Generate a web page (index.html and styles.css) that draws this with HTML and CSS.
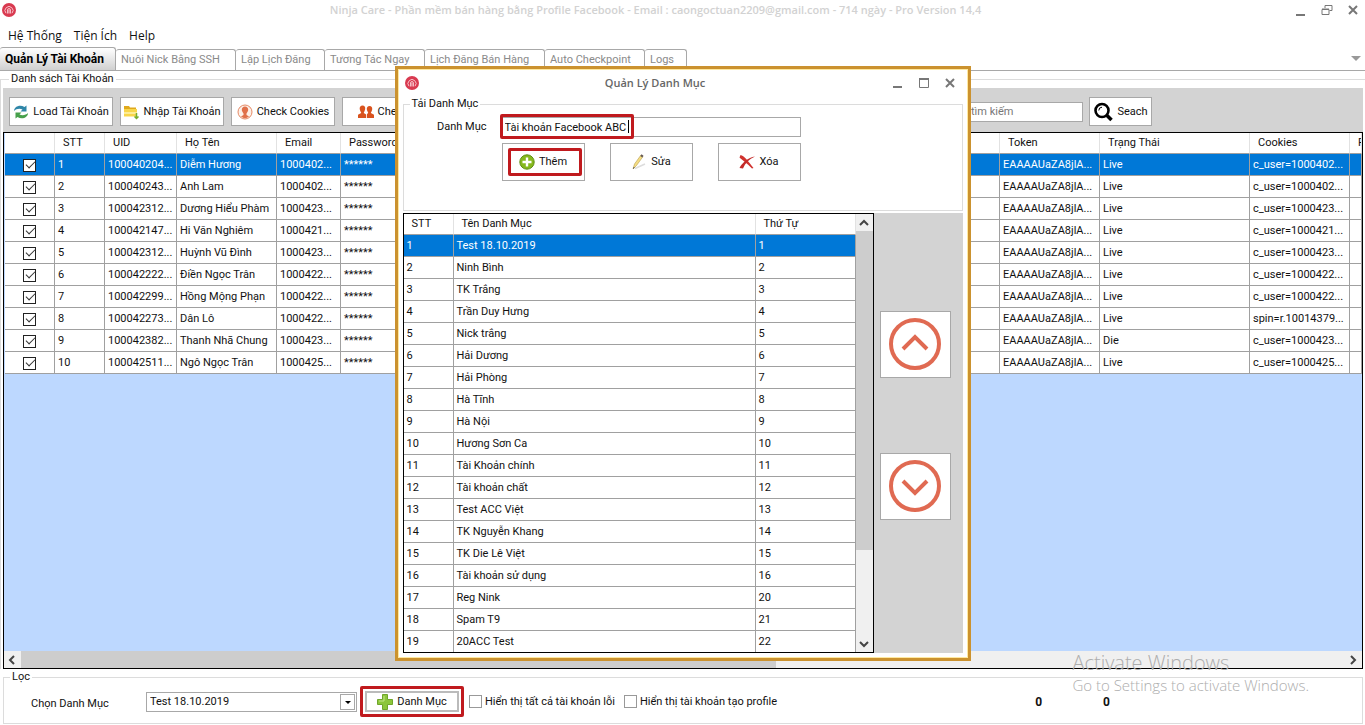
FILE: index.html
```html
<!DOCTYPE html>
<html lang="vi">

<head>
  <title>Ninja Care</title>
  <meta charset="UTF-8">
  <meta name="viewport" content="width=device-width, initial-scale=1.0">
  <link rel="stylesheet" href="styles.css">
</head>

<body>
  <!-- shared logo -->
  <svg width="0" height="0" class="defs">
    <symbol id="logo" viewBox="0 0 14 14">
      <circle cx="7" cy="7" r="7" fill="#d93a50" />
      <path d="M4 10.2A4 4 0 1 1 10 10.2" fill="none" stroke="#f7c3ca" stroke-width="1" />
      <path d="M5.6 10.5V7a1.4 1.4 0 0 1 2.8 0v3.5M7 7v3.5" fill="none" stroke="#fbdde1" stroke-width="0.9" />
    </symbol>
  </svg>

  <div class="app">
    <header class="titlebar">
      <svg class="logo"><use href="#logo" /></svg>
      <h1>Ninja Care - Phần mềm bán hàng bằng Profile Facebook - Email : caongoctuan2209@gmail.com - 714 ngày - Pro Version 14,4</h1>
      <div class="controls">
        <button aria-label="Minimize"><svg viewBox="0 0 12 12"><path d="M1 11h9" /></svg></button>
        <button aria-label="Restore"><svg viewBox="0 0 12 12"><path class="thin" d="M1 5.5h7v5H1zM1 5h7M4 4V1.5h7v5H8.500M4 1.500h7" /></svg></button>
        <button aria-label="Close"><svg viewBox="0 0 12 12"><path d="M2 2l8 8M10 2l-8 8" /></svg></button>
      </div>
    </header>

    <nav class="menu">
      <a href="#">Hệ Thống</a>
      <a href="#">Tiện Ích</a>
      <a href="#">Help</a>
    </nav>

    <nav class="tabs">
      <button class="tab active">Quản Lý Tài Khoản</button>
      <button class="tab">Nuôi Nick Bằng SSH</button>
      <button class="tab t-md">Lập Lịch Đăng</button>
      <button class="tab t-lg">Tương Tác Ngay</button>
      <button class="tab">Lịch Đăng Bán Hàng</button>
      <button class="tab t-lg">Auto Checkpoint</button>
      <button class="tab t-sm">Logs</button>
      <span class="arrow"></span>
    </nav>

    <fieldset class="accounts">
      <legend>Danh sách Tài Khoản</legend>
      <div class="toolbar">
        <button class="btn">
          <svg class="ico" viewBox="0 0 16 16">
            <path d="M1 7C1 2.500 7 0 11.500 3L13.500 1.500V7.500H7.500L9.500 5.500C6.500 4 3 5 1 7z" fill="#2f86a8" />
            <path d="M15 9c0 4.500-6 7-10.500 4L2.500 14.500V8.500h6L6.500 10.500C9.500 12 13 11 15 9z" fill="#47a04b" />
          </svg>
          Load Tài Khoản
        </button>
        <button class="btn">
          <svg class="ico" viewBox="0 0 16 16">
            <path d="M1 2h5l1 1.500h6V12H1z" fill="#e0a91c" />
            <path d="M1 5h13v7.500H1z" fill="#f8d64a" />
            <path d="M1 9h13" stroke="#fff3b0" stroke-width="1.500" />
            <path d="M13.500 9v5M11.500 12.500l2 2 2-2" fill="none" stroke="#76ad2c" stroke-width="1.500" />
          </svg>
          Nhập Tài Khoản
        </button>
        <button class="btn">
          <svg class="ico" viewBox="0 0 16 16">
            <circle cx="8" cy="8" r="7" fill="#fdf0e8" stroke="#e58a66" />
            <path d="M8 2.500c2 0 3.200 1.300 3.200 3.200C11.200 7.500 10 8.300 9.500 9.500V11l2.500 1.500Q8 16 4 12.500L6.500 11V9.500C6 8.300 4.800 7.500 4.800 5.700 4.800 3.800 6 2.500 8 2.500z" fill="#e0704a" />
          </svg>
          Check Cookies
        </button>
        <button class="btn">
          <svg class="ico" viewBox="0 0 16 16">
            <path d="M4.500 1.500c2 0 3 1.500 2.700 3.500S5.800 8 5.800 9l2.400 1.500V14H0v-3.200L3.200 9c0-1-1.300-2-1.500-4S2.700 1.500 4.500 1.500zM11.500 2c2 0 3 1.500 2.700 3.500s-1.300 2.500-1.300 3.500l3.100 1.800V14H9v-4l1.200-1c0-1-1.200-2-1.400-3.800S9.700 2 11.500 2z" fill="#d9531e" />
          </svg>
          Check Live
        </button>
        <div class="search">
          <input type="text" placeholder="tìm kiếm" aria-label="tìm kiếm">
          <button class="btn">
            <svg class="ico big" viewBox="0 0 20 20">
              <circle cx="9" cy="8.500" r="6.500" fill="none" stroke="#000" stroke-width="2.600" />
              <path d="M5.800 8.500A3.300 3.300 0 0 1 9 5.200" fill="none" stroke="#000" />
              <path d="M13.500 13l5 5" stroke="#000" stroke-width="3.500" />
            </svg>
            Seach
          </button>
        </div>
      </div>

      <div class="grid">
        <div class="grid-body">
          <table>
            <colgroup>
              <col class="w50"><col class="w50"><col class="w72"><col class="w100"><col class="w64"><col class="w72">
              <col>
              <col class="w100"><col class="w150"><col class="w100"><col class="w12">
            </colgroup>
            <thead>
              <tr>
                <th></th><th>STT</th><th>UID</th><th>Họ Tên</th><th>Email</th><th>Password</th><th></th>
                <th>Token</th><th>Trạng Thái</th><th>Cookies</th><th>P</th>
              </tr>
            </thead>
            <tbody id="accounts"></tbody>
          </table>
        </div>
        <div class="hscroll">
          <button aria-label="Left"><svg viewBox="0 0 10 10"><path d="M7 1L3 5l4 4" /></svg></button>
          <div class="track"><div class="thumb"></div></div>
          <button aria-label="Right"><svg viewBox="0 0 10 10"><path d="M3 1l4 4-4 4" /></svg></button>
        </div>
      </div>
    </fieldset>

    <fieldset class="filter">
      <legend>Lọc</legend>
      <label for="category" class="filter-label">Chọn Danh Mục</label>
      <div class="select">
        <select id="category"><option>Test 18.10.2019</option></select>
        <span class="drop"></span>
      </div>
      <div class="marked">
        <button class="btn">
          <svg class="ico" viewBox="0 0 16 16"><path d="M5.500 .5h5v5h5v5h-5v5h-5v-5h-5v-5h5z" fill="#8cc63a" stroke="#6fa52a" /><path d="M7 2v5H2" fill="none" stroke="#c3e588" /></svg>
          Danh Mục
        </button>
        <span class="mark"></span>
      </div>
      <label class="check"><input type="checkbox">Hiển thị tất cả tài khoản lỗi</label>
      <label class="check"><input type="checkbox">Hiển thị tài khoản tạo profile</label>
      <div class="counts"><b>0</b><b>0</b></div>
    </fieldset>
  </div>

  <div class="dialog" role="dialog">
    <header class="titlebar">
      <svg class="logo"><use href="#logo" /></svg>
      <h2>Quản Lý Danh Mục</h2>
      <div class="controls">
        <button aria-label="Minimize"><svg viewBox="0 0 12 12"><path d="M1 10h9" /></svg></button>
        <button aria-label="Maximize"><svg viewBox="0 0 12 12"><path class="thin" d="M1.500 1.500h9v9h-9z" /><path d="M1 2h10" /></svg></button>
        <button aria-label="Close"><svg viewBox="0 0 12 12"><path d="M2 2l8 8M10 2l-8 8" /></svg></button>
      </div>
    </header>

    <fieldset class="edit">
      <legend>Tải Danh Mục</legend>
      <div class="field">
        <label for="name">Danh Mục</label>
        <div class="marked wide">
          <input type="text" id="name" value="Tài khoản Facebook ABC">
          <span class="mark typed"></span>
        </div>
      </div>
      <div class="actions">
        <div class="marked">
          <button class="btn">
            <svg class="ico" viewBox="0 0 16 16"><circle cx="8" cy="8" r="7.200" fill="#86b81e" stroke="#5f8f14" /><path d="M8 3.500v9M3.500 8h9" stroke="#fff" stroke-width="2.400" /></svg>
            Thêm
          </button>
          <span class="mark inner"></span>
        </div>
        <button class="btn">
          <svg class="ico" viewBox="0 0 16 16"><path d="M4 14.500L14 10" stroke="#ddd" stroke-width="1.500" /><path d="M2 15l1.500-5L10 1l2 1.500-6.500 9z" fill="#f4dd83" stroke="#b99d4c" stroke-width=".6" /><path d="M9.300 2L10.500 .3l2 1.400L11.300 3.500z" fill="#665b58" /><path d="M2 15l.6-2 1.200.8z" fill="#444" /></svg>
          Sửa
        </button>
        <button class="btn">
          <svg class="ico" viewBox="0 0 16 16"><path d="M1.500 1C5 1.500 9 7 14.500 14L13 14.500C8.500 9.500 3 6 .5 3.500z" fill="#d0322e" /><path d="M16 2.500C10 5 6 9 4 14.500L.5 14C3 9 9 3.500 16 2.500z" fill="#c32a28" /></svg>
          Xóa
        </button>
      </div>
    </fieldset>

    <div class="list">
      <div class="list-grid">
        <div class="list-body">
          <table>
            <colgroup><col class="w50"><col><col class="w100"></colgroup>
            <thead>
              <tr><th>STT</th><th>Tên Danh Mục</th><th>Thứ Tự</th></tr>
            </thead>
            <tbody id="categories"></tbody>
          </table>
        </div>
        <div class="vscroll">
          <button aria-label="Up"><svg viewBox="0 0 10 10"><path d="M1 7l4-4 4 4" /></svg></button>
          <div class="track"><div class="thumb"></div></div>
          <button aria-label="Down"><svg viewBox="0 0 10 10"><path d="M1 3l4 4 4-4" /></svg></button>
        </div>
      </div>
      <div class="order">
        <button aria-label="Move up"><svg viewBox="0 0 52 52"><circle cx="26" cy="26" r="24" /><path d="M14 31l12-12 12 12" /></svg></button>
        <button aria-label="Move down"><svg viewBox="0 0 52 52"><circle cx="26" cy="26" r="24" /><path d="M14 21l12 12 12-12" /></svg></button>
      </div>
    </div>
  </div>

  <div class="watermark">
    <p class="big">Activate Windows</p>
    <p>Go to Settings to activate Windows.</p>
  </div>

  <script>
    // uid, name, email, status, cookies
    const accounts = [
      ['100040204...', 'Diễm Hương', '1000402...', 'Live', 'c_user=1000402...'],
      ['100040243...', 'Anh Lam', '1000402...', 'Live', 'c_user=1000402...'],
      ['100042312...', 'Dương Hiểu Phàm', '1000423...', 'Live', 'c_user=1000423...'],
      ['100042147...', 'Hi Văn Nghiêm', '1000421...', 'Live', 'c_user=1000421...'],
      ['100042312...', 'Huỳnh Vũ Đình', '1000423...', 'Live', 'c_user=1000423...'],
      ['100042222...', 'Điền Ngọc Trân', '1000422...', 'Live', 'c_user=1000422...'],
      ['100042299...', 'Hồng Mộng Phạn', '1000422...', 'Live', 'c_user=1000422...'],
      ['100042273...', 'Dân Lô', '1000422...', 'Live', 'spin=r.10014379...'],
      ['100042382...', 'Thanh Nhã Chung', '1000423...', 'Die', 'c_user=1000423...'],
      ['100042511...', 'Ngô Ngọc Trân', '1000425...', 'Live', 'c_user=1000425...']
    ];

    // name, order
    const categories = [
      ['Test 18.10.2019', 1], ['Ninh Bình', 2], ['TK Trắng', 3], ['Trần Duy Hưng', 4], ['Nick trắng', 5],
      ['Hải Dương', 6], ['Hải Phòng', 7], ['Hà Tĩnh', 8], ['Hà Nội', 9], ['Hương Sơn Ca', 10],
      ['Tài Khoản chính', 11], ['Tài khoản chất', 12], ['Test ACC Việt', 13], ['TK Nguyễn Khang', 14],
      ['TK Die Lê Việt', 15], ['Tài khoản sử dụng', 16], ['Reg Nink', 20], ['Spam T9', 21], ['20ACC Test', 22]
    ];

    function row(cells, selected) {
      return '<tr' + (selected ? ' class="selected"' : '') + '><td>' + cells.join('</td><td>') + '</td></tr>';
    }

    document.getElementById('accounts').innerHTML = accounts.map(function (a, i) {
      const box = '<input type="checkbox" checked aria-label="' + a[1] + '">';
      return row([box, i + 1, a[0], a[1], a[2], '******', '', 'EAAAAUaZA8jlA...', a[3], a[4], ''], i == 0);
    }).join('');

    document.getElementById('categories').innerHTML = categories.map(function (c, i) {
      return row([i + 1, c[0], c[1]], i == 0);
    }).join('');
  </script>
</body>

</html>
```
FILE: styles.css
```css
* {
  box-sizing: border-box;
}

body {
  margin: 0;
  background-color: #fff;
  color: #111;
  font-family: Roboto, "Liberation Sans", sans-serif;
  font-size: 11px;
  line-height: 16px;
  overflow: hidden;
}

button,
input,
select {
  font: inherit;
  color: inherit;
  border-radius: 0;
  margin: 0;
}

fieldset {
  margin: 0;
  padding: 0;
  min-width: 0;
  border: 1px solid #dcdcdc;
}

legend {
  padding: 0 2px;
  margin-left: 6px;
}

.defs {
  position: absolute;
}

.app {
  height: 100vh;
  display: flex;
  flex-direction: column;
}

/* title bars */
.titlebar {
  display: flex;
  align-items: center;
  height: 24px;
  padding: 0 6px 5px 2px;
}

.logo {
  width: 14px;
  height: 14px;
  flex: none;
}

.titlebar h1,
.titlebar h2 {
  flex: 1;
  margin: 0;
  text-align: center;
  font-family: "Open Sans", sans-serif;
  font-size: 11px;
  font-weight: 600;
  color: #d2d2d2;
}

.titlebar h2 {
  color: #666;
}

.controls {
  display: flex;
  gap: 14px;
}

.controls button {
  width: 12px;
  height: 12px;
  padding: 0;
  border: none;
  background: none;
}

.controls svg {
  display: block;
  width: 12px;
  height: 12px;
  fill: none;
  stroke: #777;
  stroke-width: 2;
}

.controls .thin {
  stroke-width: 1;
}

/* menu and tabs */
.menu {
  display: flex;
  gap: 12px;
  height: 24px;
  padding: 4px 8px;
}

.menu a {
  font-family: "Open Sans", sans-serif;
  font-size: 12px;
  color: #111;
  text-decoration: none;
}

.tabs {
  display: flex;
  align-items: flex-end;
  height: 23px;
  border-bottom: 1px solid #a8a8a8;
}

.tab {
  width: 120px;
  height: 21px;
  padding: 0 5px;
  text-align: left;
  white-space: nowrap;
  color: #8a8a8a;
  background-color: #fff;
  border: 1px solid #a8a8a8;
  border-left-width: 0;
  border-bottom: none;
  border-radius: 3px 3px 0 0;
}

.tab.t-sm {
  width: 42px;
}

.tab.t-md {
  width: 89px;
}

.tab.t-lg {
  width: 100px;
}

.tab.active {
  width: 116px;
  height: 23px;
  color: #000;
  font-size: 12px;
  font-weight: bold;
  background: linear-gradient(#fff, #d0d0d0);
}

.arrow {
  margin: 0 4px 9px auto;
  border: 5px solid transparent;
  border-top-color: #999;
  border-bottom: none;
}

/* accounts */
.accounts {
  flex: 1;
  min-height: 0;
  display: flex;
  flex-direction: column;
  padding: 1px 2px 0;
  border-right: none;
  border-bottom: none;
}

.toolbar {
  display: flex;
  gap: 6px;
  height: 44px;
  padding: 9px 6px 6px;
  background-color: #d3d3d3;
}

.btn {
  display: flex;
  align-items: center;
  justify-content: center;
  gap: 4px;
  flex: none;
  width: 104px;
  height: 29px;
  padding: 0;
  white-space: nowrap;
  background-color: #fff;
  border: 1px solid #a8a8a8;
}

.ico {
  width: 16px;
  height: 16px;
  flex: none;
}

.ico.big {
  width: 20px;
  height: 20px;
}

.search {
  display: flex;
  align-items: center;
  gap: 6px;
  margin-left: auto;
  padding-right: 205px;
}

.search .btn {
  width: 63px;
}

input[type="text"] {
  height: 20px;
  padding: 0 3px;
  border: 1px solid #a8a8a8;
  background-color: #fff;
  outline: none;
}

.search input {
  width: 116px;
}

.search ::placeholder {
  color: #777;
}

.toolbar .btn:not(:last-child) {
  margin-right: 1px;
}

.grid {
  flex: 1;
  min-height: 0;
  display: flex;
  flex-direction: column;
  border: 1px solid #000;
}

.grid-body {
  flex: 1;
  min-height: 0;
  overflow: hidden;
  padding-left: 1px;
  background-color: #bdd8ff;
}

table {
  width: 100%;
  table-layout: fixed;
  border-collapse: separate;
  border-spacing: 0;
}

.w12 {
  width: 12px;
}

.w50 {
  width: 50px;
}

.w64 {
  width: 64px;
}

.w72 {
  width: 72px;
}

.w100 {
  width: 100px;
}

.w150 {
  width: 150px;
}

th,
td {
  height: 22px;
  text-align: left;
  font-weight: normal;
  white-space: nowrap;
  overflow: hidden;
  background-color: #fff;
  border-right: 1px solid #a0a0a0;
  border-bottom: 1px solid #a0a0a0;
}

th {
  height: 21px;
  padding: 0 0 0 8px;
  border-right-color: #e2e2e2;
}

td {
  padding: 1px 0 0 3px;
}

.selected td {
  color: #fff;
  background-color: #0078d7;
}

input[type="checkbox"] {
  appearance: none;
  display: block;
  position: relative;
  flex: none;
  width: 13px;
  height: 13px;
  background-color: #fff;
  border: 1px solid #999;
}

td input[type="checkbox"] {
  margin-left: 15px;
  border-color: #222;
}

input[type="checkbox"]:checked::after {
  content: "";
  position: absolute;
  left: 2px;
  top: 1px;
  width: 8px;
  height: 4px;
  border: solid #333;
  border-width: 0 0 1px 1px;
  transform: rotate(-45deg);
}

/* scroll bars */
.hscroll,
.vscroll {
  display: flex;
  background-color: #f0f0f0;
}

.hscroll {
  height: 17px;
}

.vscroll {
  flex-direction: column;
  width: 17px;
}

.hscroll button,
.vscroll button {
  width: 17px;
  height: 17px;
  padding: 3px;
  border: none;
  background: none;
}

.hscroll svg,
.vscroll svg {
  display: block;
  width: 10px;
  height: 10px;
  fill: none;
  stroke: #444;
  stroke-width: 2;
}

.track {
  flex: 1;
}

.thumb {
  background-color: #cdcdcd;
}

.hscroll .thumb {
  width: 57%;
  height: 17px;
}

.vscroll .thumb {
  height: 79%;
}

/* filter */
.filter {
  display: flex;
  align-items: center;
  height: 55px;
  margin: 0 2px 1px 3px;
  padding-top: 6px;
}

.filter-label {
  align-self: flex-end;
  width: 115px;
  margin-left: 27px;
}

.select {
  position: relative;
  width: 211px;
}

.select select {
  appearance: none;
  display: block;
  width: 100%;
  height: 20px;
  padding: 0 3px;
  background-color: #fff;
  border: 1px solid #a8a8a8;
}

.drop {
  position: absolute;
  right: 2px;
  top: 2px;
  width: 15px;
  height: 16px;
  border: 1px solid #a8a8a8;
  pointer-events: none;
}

.drop::after {
  content: "";
  position: absolute;
  left: 4px;
  top: 6px;
  border: 3px solid transparent;
  border-top-color: #000;
  border-bottom: none;
}

/* red frames */
.marked {
  position: relative;
}

.mark {
  position: absolute;
  inset: -5px;
  border: 3px solid #c01a1e;
  border-radius: 2px;
  pointer-events: none;
}

.filter .marked {
  margin: 0 10px 0 8px;
}

.filter .btn {
  width: 94px;
  height: 21px;
  border: 2px solid #bbb;
}

.check {
  display: flex;
  align-items: center;
  gap: 3px;
  margin-right: 9px;
}

.counts {
  display: flex;
  gap: 61px;
  margin-left: auto;
  padding-right: 252px;
  font-size: 12px;
}

/* category dialog */
.dialog {
  position: absolute;
  left: 50%;
  top: 66px;
  width: 576px;
  transform: translateX(-50%);
  padding: 0 5px;
  padding-bottom: 5px;
  background-color: #fff;
  border: 3px solid #cb922f;
  box-shadow: inset 0 0 0 1px #ffe9a0;
}

.dialog .titlebar {
  height: 27px;
  padding: 1px 7px 0 2px;
}

.edit {
  height: 115px;
  margin-bottom: 2px;
}

.field {
  display: flex;
  align-items: center;
  justify-content: flex-end;
  gap: 14px;
  margin: 5px 161px 6px 0;
}

.wide {
  width: 300px;
}

.wide input {
  display: block;
  width: 100%;
}

.typed {
  inset: -3px auto -2px -1px;
  width: 134px;
}

.typed::after {
  content: "";
  position: absolute;
  right: 2px;
  top: 3px;
  bottom: 3px;
  border-right: 1px solid #000;
}

.actions {
  display: flex;
  gap: 25px;
  margin-left: 98px;
}

.actions .btn {
  width: 83px;
  height: 38px;
}

.inner {
  inset: 5px 3px 5px 6px;
}

.list {
  display: flex;
  background-color: #d3d3d3;
}

.list-grid {
  flex: 1;
  display: flex;
  height: 440px;
  border: 1px solid #000;
  background-color: #fff;
}

.list-body {
  flex: 1;
  overflow: hidden;
}

.order {
  display: flex;
  flex-direction: column;
  justify-content: center;
  gap: 75px;
  padding: 0 12px 36px 6px;
}

.order button {
  width: 71px;
  height: 67px;
  padding: 0;
  background-color: #fff;
  border: 1px solid #a8a8a8;
}

.order svg {
  display: block;
  width: 52px;
  height: 52px;
  margin: 0 auto;
  fill: none;
  stroke: #e06a52;
  stroke-width: 4;
}

/* windows watermark */
.watermark {
  position: absolute;
  right: 56px;
  bottom: 31px;
  color: #adadad;
  font-family: "Open Sans", sans-serif;
  font-size: 15px;
  font-weight: 300;
  pointer-events: none;
}

.watermark p {
  margin: 0;
  line-height: 18px;
}

.watermark .big {
  font-size: 20px;
  line-height: 26px;
}
```
